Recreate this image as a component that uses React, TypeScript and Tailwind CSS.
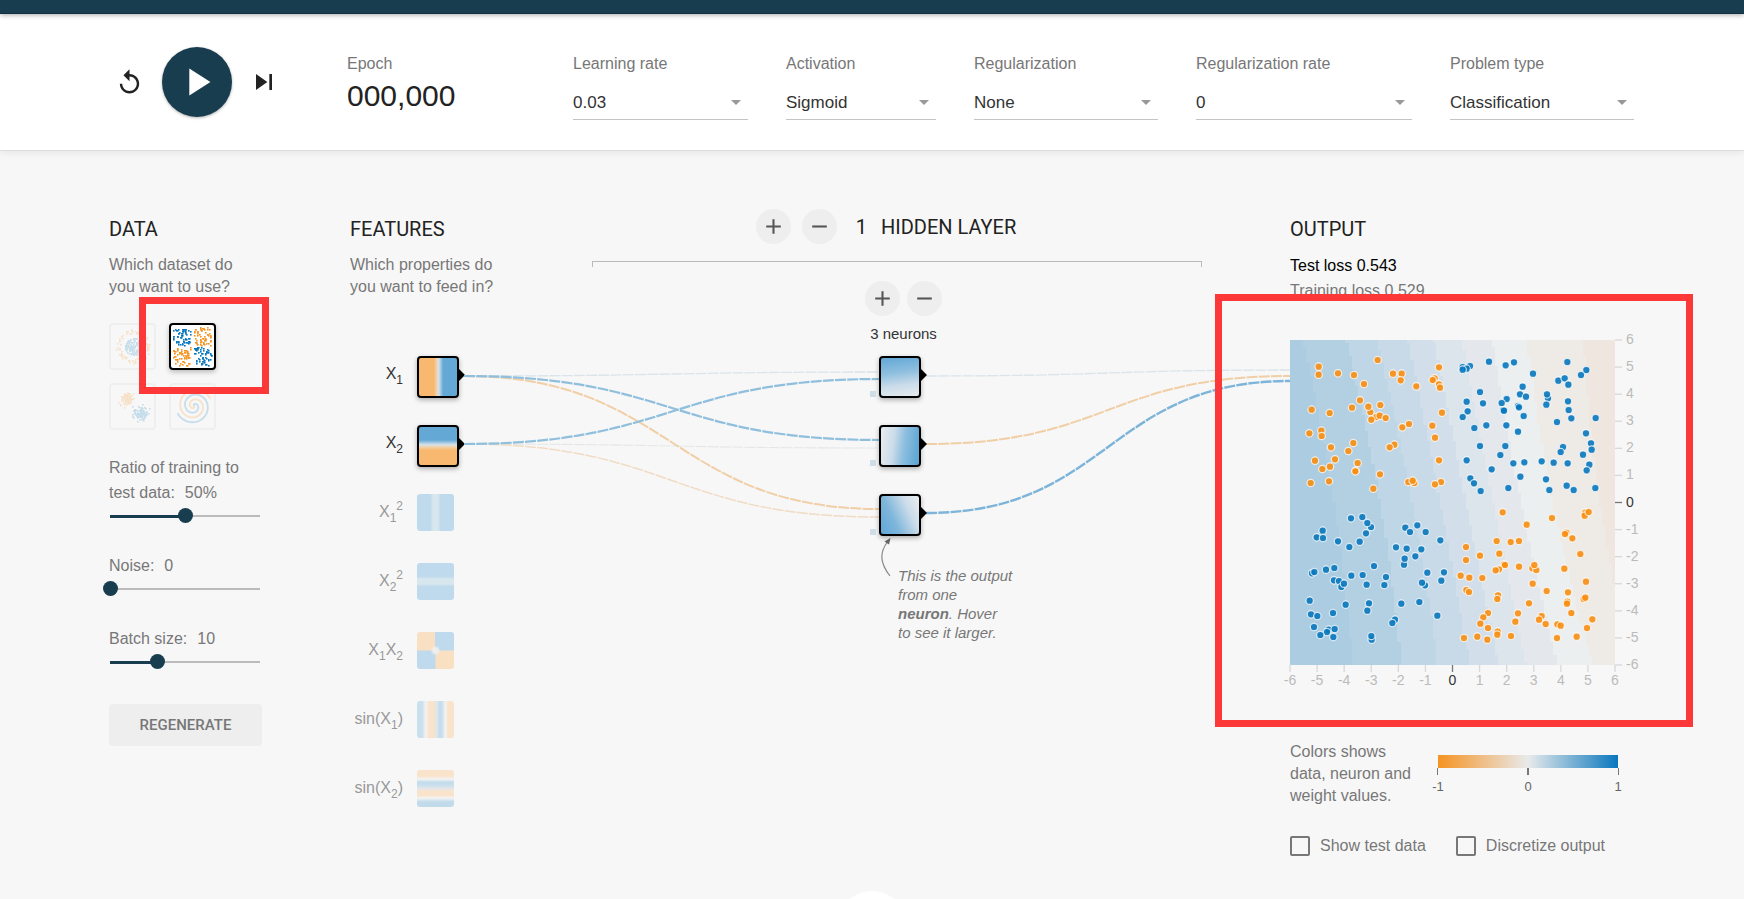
import { useState } from "react";
import type { ReactNode } from "react";

type Pair = [number, number];

const BLUE = "#0877bd";
const ORANGE = "#f59322";

/* ---------- deterministic random numbers for the thumbnails ---------- */

function createRandom(seed: number) {
  let s = seed;
  return () => {
    s = (s * 1664525 + 1013904223) % 4294967296;
    return s / 4294967296;
  };
}

function gaussian(rand: () => number) {
  return rand() + rand() + rand() + rand() - 2;
}

type Dot = { x: number; y: number; c: string };

function circleDots(): Dot[] {
  const rand = createRandom(7);
  const dots: Dot[] = [];
  for (let i = 0; i < 110; i++) {
    const a = rand() * Math.PI * 2;
    const r = Math.sqrt(rand()) * 8.5;
    dots.push({ x: 22 + r * Math.cos(a), y: 21 + r * Math.sin(a), c: BLUE });
  }
  for (let i = 0; i < 90; i++) {
    const a = rand() * Math.PI * 2;
    const r = 13 + rand() * 4;
    dots.push({ x: 22 + r * Math.cos(a), y: 21 + r * Math.sin(a), c: ORANGE });
  }
  return dots;
}

function xorDots(): Dot[] {
  const rand = createRandom(21);
  const dots: Dot[] = [];
  for (let i = 0; i < 250; i++) {
    const left = i % 2 === 0;
    const top = i % 4 < 2;
    dots.push({
      x: (left ? 2 : 23) + rand() * 17,
      y: (top ? 2 : 22) + rand() * 18,
      c: left === top ? BLUE : ORANGE,
    });
  }
  return dots;
}

function gaussDots(): Dot[] {
  const rand = createRandom(5);
  const dots: Dot[] = [];
  for (let i = 0; i < 100; i++) {
    dots.push({ x: 15 + gaussian(rand) * 6, y: 13 + gaussian(rand) * 6, c: ORANGE });
    dots.push({ x: 29 + gaussian(rand) * 6, y: 28 + gaussian(rand) * 6, c: BLUE });
  }
  return dots;
}

function spiralPath(phase: number) {
  const parts: string[] = [];
  for (let i = 0; i <= 80; i++) {
    const t = i / 80;
    const a = t * 1.85 * 2 * Math.PI + phase;
    const r = t * 18;
    const x = (23 + r * Math.sin(a)).toFixed(2);
    const y = (21 - r * Math.cos(a)).toFixed(2);
    parts.push(`${i === 0 ? "M" : "L"}${x} ${y}`);
  }
  return parts.join("");
}

function Dots({ dots }: { dots: Dot[] }) {
  return (
    <svg viewBox="0 0 43 43" className="block size-full">
      {dots.map((d, i) => (
        <rect key={i} x={Math.round(d.x)} y={Math.round(d.y)} width="1.6" height="1.6" fill={d.c} />
      ))}
    </svg>
  );
}

function Spiral() {
  return (
    <svg viewBox="0 0 43 43" className="block size-full" fill="none" strokeWidth="1.8">
      <path d={spiralPath(2.1)} stroke={ORANGE} />
      <path d={spiralPath(2.1 + Math.PI)} stroke={BLUE} />
    </svg>
  );
}

const datasets: { name: string; art: ReactNode }[] = [
  { name: "Circle", art: <Dots dots={circleDots()} /> },
  { name: "Exclusive or", art: <Dots dots={xorDots()} /> },
  { name: "Gaussian", art: <Dots dots={gaussDots()} /> },
  { name: "Spiral", art: <Spiral /> },
];

/* ------------------------------ controls ------------------------------ */

function Icon({ d, className }: { d: string; className: string }) {
  return (
    <svg viewBox="0 0 24 24" className={className} fill="currentColor" aria-hidden="true">
      <path d={d} />
    </svg>
  );
}

function SelectField({ id, label, value, grow }: { id: string; label: string; value: string; grow: string }) {
  return (
    <div className={`min-w-0 ${grow}`}>
      <label htmlFor={id} className="block leading-[20px] text-[#777]">
        {label}
      </label>
      <div className="relative mt-[12px] border-b border-[#c4c4c4]">
        <select
          id={id}
          defaultValue={value}
          className="block h-[33px] w-full appearance-none bg-transparent pr-6 text-[17px] text-[#333] outline-none"
        >
          <option value={value}>{value}</option>
        </select>
        <Icon
          d="M7 10l5 5 5-5z"
          className="pointer-events-none absolute top-[4px] right-0 size-[24px] text-[#999]"
        />
      </div>
    </div>
  );
}

function RangeField({
  id,
  label,
  suffix,
  min,
  max,
  step,
  initial,
}: {
  id: string;
  label: ReactNode;
  suffix?: string;
  min: number;
  max: number;
  step: number;
  initial: number;
}) {
  const [value, setValue] = useState(initial);
  const percent = ((value - min) / (max - min)) * 100;
  return (
    <div>
      <label htmlFor={id} className="block leading-[25px] text-[#777]">
        {label}
        <span className="pl-[10px]">
          {value}
          {suffix}
        </span>
      </label>
      <div className="relative mt-[3px] ml-px flex h-[15px] w-[150px] items-center">
        <div className="h-[2px] w-full bg-[#bbb]">
          <div className="h-[3px] bg-[#183d4e]" style={{ width: `${percent}%` }} />
        </div>
        <input
          id={id}
          type="range"
          min={min}
          max={max}
          step={step}
          value={value}
          onChange={(e) => setValue(Number(e.target.value))}
          className="absolute top-0 -left-[7px] h-[15px] w-[165px] appearance-none bg-transparent [&::-webkit-slider-thumb]:size-[15px] [&::-webkit-slider-thumb]:appearance-none [&::-webkit-slider-thumb]:rounded-full [&::-webkit-slider-thumb]:bg-[#183d4e]"
        />
      </div>
    </div>
  );
}

function RoundButton({ label, minus }: { label: string; minus?: boolean }) {
  return (
    <button
      type="button"
      aria-label={label}
      className="flex size-[35px] items-center justify-center rounded-full bg-[#eee] text-[#555]"
    >
      <Icon d={minus ? "M19 13H5v-2h14v2z" : "M19 13h-6v6h-2v-6H5v-2h6V5h2v6h6v2z"} className="size-[25px]" />
    </button>
  );
}

function Heading({ children }: { children: ReactNode }) {
  return (
    <h2 className="font-['Roboto',sans-serif] text-[20px] leading-[24px] text-[#222]">{children}</h2>
  );
}

function Connector() {
  return (
    <svg viewBox="0 0 6 12" className="absolute top-[11px] -right-[8px] h-[12px] w-[6px]" aria-hidden="true">
      <path d="M0 0l6 6-6 6z" fill="#000" />
    </svg>
  );
}

/* ------------------------------ features ------------------------------ */

function Sub({ children }: { children: ReactNode }) {
  return <sub className="bottom-[-5px] text-[12px]">{children}</sub>;
}

function Sup({ children }: { children: ReactNode }) {
  return <sup className="top-[-7px] text-[12px]">{children}</sup>;
}

const features: { key: string; label: ReactNode; active?: boolean; fill: string }[] = [
  {
    key: "x1",
    label: (
      <>
        X<Sub>1</Sub>
      </>
    ),
    active: true,
    fill: "bg-[linear-gradient(90deg,#f8b870_40%,#f3cfa4_46%,#d5e2ea_52%,#64a9d6_62%)]",
  },
  {
    key: "x2",
    label: (
      <>
        X<Sub>2</Sub>
      </>
    ),
    active: true,
    fill: "bg-[linear-gradient(180deg,#64a9d6_36%,#d5e2ea_47%,#f3cfa4_53%,#f8b870_60%)]",
  },
  {
    key: "x1sq",
    label: (
      <>
        X<Sub>1</Sub>
        <Sup>2</Sup>
      </>
    ),
    fill: "bg-[linear-gradient(90deg,#bfdaec_36%,#d8e7ee_44%,#d8e7ee_56%,#bfdaec_64%)]",
  },
  {
    key: "x2sq",
    label: (
      <>
        X<Sub>2</Sub>
        <Sup>2</Sup>
      </>
    ),
    fill: "bg-[linear-gradient(180deg,#bfdaec_36%,#d8e7ee_44%,#d8e7ee_56%,#bfdaec_64%)]",
  },
  {
    key: "x1x2",
    label: (
      <>
        X<Sub>1</Sub>X<Sub>2</Sub>
      </>
    ),
    fill: "bg-[radial-gradient(circle,#eeeeee_8%,transparent_20%),conic-gradient(#bfdaec_24%,#fae0c3_26%,#fae0c3_49%,#bfdaec_51%,#bfdaec_74%,#fae0c3_76%,#fae0c3_99%,#bfdaec)]",
  },
  {
    key: "sinx1",
    label: (
      <>
        sin(X<Sub>1</Sub>)
      </>
    ),
    fill: "bg-[linear-gradient(90deg,#cbe0ed_14%,#f3f3f3_24%,#f9e3cb_32%,#f9e3cb_44%,#dfe6ea_54%,#c2dbeb_62%,#cbe0ed_68%,#f3f3f3_77%,#f9e3cb_84%)]",
  },
  {
    key: "sinx2",
    label: (
      <>
        sin(X<Sub>2</Sub>)
      </>
    ),
    fill: "bg-[linear-gradient(180deg,#f9e3cb_16%,#f3f3f3_25%,#c2dbeb_33%,#cbe0ed_42%,#e9e6e4_52%,#f9e3cb_58%,#f9e3cb_68%,#f3f3f3_76%,#c2dbeb_86%)]",
  },
];

/* ------------------------------- network ------------------------------ */

const links: { from: Pair; to: Pair; color: string; width: number }[] = [
  { from: [464, 376], to: [880, 372], color: "#dae4ea", width: 1.3 },
  { from: [464, 444], to: [880, 448], color: "#e4e6e8", width: 1.1 },
  { from: [464, 444], to: [880, 517], color: "#f0dcc4", width: 1.5 },
  { from: [464, 376], to: [880, 509], color: "#f0cfa6", width: 2 },
  { from: [464, 376], to: [880, 440], color: "#8fbfdd", width: 2.2 },
  { from: [464, 444], to: [880, 379], color: "#8fbfdd", width: 2.2 },
  { from: [926, 376], to: [1290, 370], color: "#dae4ea", width: 1.3 },
  { from: [926, 444], to: [1290, 376], color: "#f0cfa6", width: 2 },
  { from: [926, 513], to: [1290, 381], color: "#7db4d9", width: 2.4 },
];

function linkPath([x0, y0]: Pair, [x1, y1]: Pair) {
  const mid = (x0 + x1) / 2;
  return `M${x0} ${y0}C${mid} ${y0} ${mid} ${y1} ${x1} ${y1}`;
}

const neurons = [
  "bg-[linear-gradient(172deg,#69abd7_10%,#8fbfdf_40%,#cbdcea_68%,#e6eaed_95%)]",
  "bg-[linear-gradient(97deg,#e6eaec_8%,#cbdcea_35%,#8fbfdf_58%,#62a8d5_88%)]",
  "bg-[linear-gradient(65deg,#66abd8_12%,#7fb6db_36%,#cbdcea_68%,#e8ecef_92%)]",
];

/* ------------------------------- output ------------------------------- */

/* Points are on a grid of 975 units a side, three units to a pixel. */
const upperOrange: Pair[] = [
  [86, 80], [86, 104], [144, 100], [192, 105], [263, 60], [222, 132], [309, 101], [335, 101], [332, 121],
  [379, 139], [447, 82], [434, 115], [428, 120], [447, 133], [450, 143], [65, 209], [119, 219], [186, 203],
  [210, 181], [241, 216], [235, 200], [271, 195], [259, 231], [269, 227], [244, 239], [287, 234], [456, 218],
  [58, 280], [94, 272], [95, 288], [337, 262], [357, 252], [427, 257], [435, 293], [123, 322], [190, 309],
  [175, 333], [313, 314], [299, 322], [75, 362], [135, 358], [120, 380], [97, 387], [203, 369], [197, 392],
  [196, 394], [270, 403], [447, 361], [62, 429], [117, 424], [250, 446], [355, 426], [373, 429], [368, 422],
  [453, 426], [435, 433],
];
const upperBlue: Pair[] = [
  [597, 65], [672, 67], [647, 76], [832, 66], [518, 81], [540, 78], [530, 86], [518, 89], [729, 101],
  [889, 90], [873, 105], [805, 122], [824, 115], [835, 134], [570, 156], [698, 140], [690, 163], [708, 170],
  [530, 185], [579, 190], [650, 177], [635, 189], [774, 175], [771, 163], [769, 194], [834, 184], [684, 198],
  [687, 202], [533, 214], [639, 211], [642, 212], [836, 210], [518, 231], [701, 228], [844, 235], [917, 234],
  [801, 246], [553, 264], [589, 256], [649, 256], [684, 275], [888, 280], [903, 310], [570, 318], [646, 318],
  [819, 321], [812, 336], [905, 329], [631, 345], [879, 344], [530, 361], [670, 370], [703, 367], [755, 364],
  [791, 368], [833, 370], [898, 374], [890, 391], [605, 388], [541, 415], [552, 430], [691, 410], [768, 418],
  [572, 453], [655, 444], [778, 450], [830, 437], [851, 450], [916, 444],
];
const lowerBlue: Pair[] = [
  [183, 535], [217, 531], [243, 561], [232, 549], [228, 580], [98, 572], [80, 592], [99, 594], [144, 604],
  [209, 605], [178, 621], [346, 563], [382, 556], [360, 576], [407, 576], [451, 601], [318, 622], [350, 626],
  [394, 628], [376, 649], [342, 674], [344, 656], [252, 678], [66, 700], [73, 696], [108, 689], [133, 684],
  [184, 707], [218, 705], [288, 711], [412, 698], [462, 697], [132, 721], [147, 723], [154, 741], [162, 731],
  [230, 734], [283, 735], [405, 736], [396, 728], [454, 722], [59, 782], [167, 794], [237, 790], [232, 812],
  [334, 791], [388, 786], [442, 827], [63, 823], [82, 828], [129, 819], [72, 861], [116, 869], [111, 876],
  [134, 867], [91, 885], [130, 891], [315, 839], [307, 849], [245, 899], [244, 888],
];
const lowerOrange: Pair[] = [
  [638, 517], [786, 534], [886, 518], [884, 527], [896, 516], [710, 554], [829, 578], [825, 582], [847, 595],
  [528, 621], [620, 603], [662, 606], [687, 603], [628, 641], [570, 647], [528, 660], [871, 642], [642, 673],
  [645, 675], [627, 688], [617, 691], [687, 680], [727, 685], [739, 690], [733, 675], [823, 686], [512, 707],
  [538, 713], [577, 714], [728, 731], [888, 725], [529, 750], [537, 756], [624, 766], [622, 777], [770, 753],
  [834, 757], [717, 790], [881, 777], [886, 773], [832, 785], [831, 791], [594, 819], [580, 832], [684, 820],
  [676, 845], [755, 828], [747, 839], [844, 819], [907, 838], [571, 851], [594, 864], [767, 852], [802, 853],
  [812, 857], [891, 864], [623, 875], [622, 884], [522, 894], [562, 890], [592, 899], [663, 888], [801, 894],
  [860, 890],
];

/* Band edges at the top, middle and bottom of the plot, in pixels. */
const bands: { color: string; edge: [number, number, number] }[] = [
  { color: "#b3d0e3", edge: [13, 44, 62] },
  { color: "#bfd6e6", edge: [56, 90, 111] },
  { color: "#c8dae8", edge: [87, 122, 148] },
  { color: "#d2dfea", edge: [118, 150, 180] },
  { color: "#dbe5eb", edge: [144, 176, 208] },
  { color: "#e4e8ed", edge: [172, 203, 236] },
  { color: "#ecefef", edge: [202, 231, 267] },
  { color: "#eeeae5", edge: [237, 263, 303] },
  { color: "#efe6e0", edge: [293, 310, 340] },
];

const CELL = 3.25;

function bandPath([a, b, c]: [number, number, number]) {
  let d = "";
  for (let i = 0; i < 100; i++) {
    const t = (i + 0.5) / 100;
    const v = 2 * a * (t - 0.5) * (t - 1) - 4 * b * t * (t - 1) + 2 * c * t * (t - 0.5);
    const x = Math.min(325, Math.round(v / CELL) * CELL);
    d += `${i === 0 ? "M" : "L"}${x} ${i * CELL}L${x} ${(i + 1) * CELL}`;
  }
  return `${d}L325 325L325 0Z`;
}

function Points({ data, color }: { data: Pair[]; color: string }) {
  return (
    <g fill={color} fillOpacity="0.9" stroke="#fff" strokeOpacity="0.75" strokeWidth="1.2">
      {data.map(([x, y], i) => (
        <circle key={i} cx={x / 3} cy={y / 3} r="3.7" />
      ))}
    </g>
  );
}

const ticks = [-6, -5, -4, -3, -2, -1, 0, 1, 2, 3, 4, 5, 6];

function OutputChart() {
  return (
    <svg
      viewBox="0 0 345 349"
      className="block h-[349px] w-[345px] overflow-visible font-['Liberation_Sans',sans-serif] text-[14px]"
      role="img"
      aria-label="Output of the network"
    >
      <rect width="325" height="325" fill="#abcce1" />
      <g shapeRendering="crispEdges">
        {bands.map((b) => (
          <path key={b.color} d={bandPath(b.edge)} fill={b.color} />
        ))}
      </g>
      <Points data={upperOrange} color="#f78e12" />
      <Points data={lowerOrange} color="#f78e12" />
      <Points data={upperBlue} color={BLUE} />
      <Points data={lowerBlue} color={BLUE} />
      {ticks.map((t) => {
        const p = ((t + 6) / 12) * 325;
        const line = t === 0 ? "#777" : "#d8d8d8";
        const text = t === 0 ? "#333" : "#bbb";
        return (
          <g key={t}>
            <path d={`M${p} 325v7`} stroke={line} strokeWidth="1.3" />
            <path d={`M325 ${325 - p}h7`} stroke={line} strokeWidth="1.3" />
            <text x={p} y="345" textAnchor="middle" fill={text}>
              {t}
            </text>
            <text x="336" y={329 - p} fill={text}>
              {t}
            </text>
          </g>
        );
      })}
    </svg>
  );
}

function Legend() {
  return (
    <svg
      viewBox="0 0 183 40"
      className="mt-[14px] block h-[40px] w-[183px] overflow-visible font-['Liberation_Sans',sans-serif] text-[13px]"
      role="img"
      aria-label="Color scale from -1 to 1"
    >
      <defs>
        <linearGradient id="scale">
          <stop offset="0" stopColor="#f59322" />
          <stop offset="0.5" stopColor="#e8eaeb" />
          <stop offset="1" stopColor="#0877bd" />
        </linearGradient>
      </defs>
      <rect x="1" width="180" height="13" fill="url(#scale)" />
      <path d="M.5 13v7M181.500 13v7" stroke="#777" />
      <path d="M91 13v7" stroke="#777" strokeWidth="2" />
      <g fill="#666" textAnchor="middle">
        <text x="1" y="36">-1</text>
        <text x="91" y="36">0</text>
        <text x="181" y="36">1</text>
      </g>
    </svg>
  );
}

function CheckField({ id, label }: { id: string; label: string }) {
  return (
    <div className="flex items-center gap-[10px]">
      <input
        id={id}
        type="checkbox"
        className="size-[20px] appearance-none rounded-[2px] border-2 border-[#777] checked:bg-[#183d4e]"
      />
      <label htmlFor={id} className="leading-[20px] text-[#777]">
        {label}
      </label>
    </div>
  );
}

/* -------------------------------- page -------------------------------- */

export default function App() {
  const [selected, setSelected] = useState(1);

  return (
    <div className="relative min-h-screen overflow-hidden bg-[#f7f7f7] font-['Liberation_Sans',Arial,sans-serif] text-[16px] text-[#333]">
      <div className="relative z-10 h-[14px] border-b border-[#12303e] bg-[#183d4e] shadow-[0_1px_5px_rgba(0,0,0,0.35)]" />

      <header className="border-b border-[#ddd] bg-white shadow-[0_2px_8px_rgba(0,0,0,0.07)]">
        <div className="mx-auto flex h-[136px] w-full max-w-[1526px] items-start">
          <div className="flex w-[238px] shrink-0 items-center gap-[18px] pt-[33px] pl-[6px]">
            <button type="button" aria-label="Reset" className="text-[#222]">
              <Icon
                d="M12 5V1L7 6l5 5V7c3.310 0 6 2.690 6 6s-2.690 6-6 6-6-2.690-6-6H4c0 4.420 3.580 8 8 8s8-3.580 8-8-3.580-8-8-8z"
                className="block size-[29px]"
              />
            </button>
            <button
              type="button"
              aria-label="Play"
              className="flex size-[70px] items-center justify-center rounded-full bg-[#183d4e] text-white shadow-[0_1px_3px_rgba(0,0,0,0.3)]"
            >
              <Icon d="M8 5v14l11-7z" className="size-[46px]" />
            </button>
            <button type="button" aria-label="Step" className="-ml-[2px] text-[#222]">
              <Icon d="M6 18l8.500-6L6 6v12zM16 6v12h2V6h-2z" className="block size-[32px]" />
            </button>
          </div>
          <div className="w-[226px] shrink-0 pt-[40px]">
            <div className="leading-[20px] text-[#777]">Epoch</div>
            <div className="mt-[5px] text-[30px] leading-[34px] text-[#222]">000,000</div>
          </div>
          <div className="flex min-w-0 flex-1 gap-[38px] pt-[40px] pr-px">
            <SelectField id="rate" label="Learning rate" value="0.03" grow="flex-[175]" />
            <SelectField id="activation" label="Activation" value="Sigmoid" grow="flex-[150]" />
            <SelectField id="regularization" label="Regularization" value="None" grow="flex-[184]" />
            <SelectField id="regrate" label="Regularization rate" value="0" grow="flex-[216]" />
            <SelectField id="problem" label="Problem type" value="Classification" grow="flex-[184]" />
          </div>
        </div>
      </header>

      <main className="mx-auto flex w-full max-w-[1526px] items-start gap-[88px] pt-[58px]">
        <section className="w-[153px] shrink-0 pt-[8px]">
          <Heading>DATA</Heading>
          <p className="mt-[13px] leading-[22px] whitespace-nowrap text-[#777]">
            Which dataset do
            <br />
            you want to use?
          </p>
          <div className="relative mt-[25px] grid w-fit grid-cols-2 gap-[13px]">
            {datasets.map((d, i) => (
              <button
                key={d.name}
                type="button"
                aria-label={d.name}
                aria-pressed={i === selected}
                onClick={() => setSelected(i)}
                className={`size-[47px] rounded-[4px] border-2 ${
                  i === selected
                    ? "border-black bg-white shadow-[0_2px_5px_rgba(0,0,0,0.25)]"
                    : "border-[#d4d4d4] opacity-20"
                }`}
              >
                {d.art}
              </button>
            ))}
            <div className="pointer-events-none absolute -top-[26px] left-[30px] h-[97px] w-[130px] border-7 border-[#fd3838]" />
          </div>
          <div className="mt-[25px] flex flex-col gap-[30px]">
            <RangeField
              id="ratio"
              label={
                <>
                  Ratio of training to
                  <br />
                  test data:
                </>
              }
              suffix="%"
              min={10}
              max={90}
              step={10}
              initial={50}
            />
            <RangeField id="noise" label="Noise:" min={0} max={50} step={5} initial={0} />
            <RangeField id="batch" label="Batch size:" min={1} max={30} step={1} initial={10} />
          </div>
          <button
            type="button"
            className="mt-[35px] block h-[42px] w-full rounded-[4px] bg-[#eee] font-['Roboto',sans-serif] text-[15px] font-medium text-[#777]"
          >
            REGENERATE
          </button>
        </section>

        <section className="w-[154px] shrink-0 pt-[8px]">
          <Heading>FEATURES</Heading>
          <p className="mt-[13px] leading-[22px] whitespace-nowrap text-[#777]">
            Which properties do
            <br />
            you want to feed in?
          </p>
          <ul className="mt-[58px]">
            {features.map((f) => (
              <li key={f.key} className="flex h-[69px] items-start gap-[14px]">
                <span
                  className={`w-[53px] pt-[8px] text-right leading-[20px] whitespace-nowrap ${
                    f.active ? "text-[#333]" : "text-[#999]"
                  }`}
                >
                  {f.label}
                </span>
                {f.active ? (
                  <span
                    className={`relative size-[42px] rounded-[4px] border-2 border-black bg-origin-border shadow-[0_2px_5px_rgba(0,0,0,0.3)] ${f.fill}`}
                  >
                    <Connector />
                  </span>
                ) : (
                  <span className={`size-[37px] rounded-[3px] ${f.fill}`} />
                )}
              </li>
            ))}
          </ul>
        </section>

        <section className="relative min-w-0 flex-1">
          <svg
            viewBox="592 209 611 500"
            className="pointer-events-none absolute top-0 left-0 h-[500px] w-[611px] overflow-visible"
            fill="none"
            aria-hidden="true"
          >
            {links.map((l, i) => (
              <path
                key={i}
                d={linkPath(l.from, l.to)}
                stroke={l.color}
                strokeWidth={l.width}
                strokeDasharray="11 1.200"
              />
            ))}
            <path d="M890 576C880 563 879 553 888 541" stroke="#888" strokeWidth="1.2" />
            <path d="M890.500 538l-6 3.500 4.500 3z" fill="#666" />
          </svg>

          <div className="flex items-center justify-center gap-[11px] pr-[22px]">
            <RoundButton label="Add layer" />
            <RoundButton label="Remove layer" minus />
            <div className="ml-[8px] flex gap-[14px]">
              <Heading>1</Heading>
              <Heading>HIDDEN LAYER</Heading>
            </div>
          </div>
          <div className="mt-[17px] h-[6px] border-x border-t border-[#bbb]" />

          <div className="mt-[14px] flex flex-col items-center pl-[13px]">
            <div className="flex gap-[7px]">
              <RoundButton label="Add neuron" />
              <RoundButton label="Remove neuron" minus />
            </div>
            <div className="mt-[8px] text-[15px] leading-[20px]">3 neurons</div>
          </div>
          <div className="mt-[12px] flex flex-col items-center pl-[6px]">
            {neurons.map((fill) => (
              <div key={fill} className="h-[69px]">
                <div
                  className={`relative size-[42px] rounded-[4px] border-2 border-black bg-origin-border shadow-[0_2px_5px_rgba(0,0,0,0.3)] ${fill}`}
                >
                  <Connector />
                  <div className="absolute -bottom-[1px] -left-[11px] size-[6px] bg-[#cfdde6]" />
                </div>
              </div>
            ))}
          </div>
          <p className="ml-[50%] pt-[3px] pl-px text-[15px] leading-[19px] text-[#777] italic">
            This is the output
            <br />
            from one
            <br />
            <b>neuron</b>. Hover
            <br />
            to see it larger.
          </p>
        </section>

        <section className="w-[345px] shrink-0 pt-[8px]">
          <Heading>OUTPUT</Heading>
          <div className="mt-[12px] leading-[25px]">
            <div className="text-black">Test loss 0.543</div>
            <div className="text-[#777]">Training loss 0.529</div>
          </div>
          <div className="relative mt-[37px]">
            <OutputChart />
            <div className="pointer-events-none absolute -top-[46px] -left-[75px] h-[433px] w-[478px] border-7 border-[#fd3838]" />
          </div>
          <div className="mt-[52px] flex gap-[26px]">
            <p className="leading-[22px] whitespace-nowrap text-[#777]">
              Colors shows
              <br />
              data, neuron and
              <br />
              weight values.
            </p>
            <Legend />
          </div>
          <div className="mt-[29px] flex gap-[30px]">
            <CheckField id="test" label="Show test data" />
            <CheckField id="discretize" label="Discretize output" />
          </div>
        </section>
      </main>

      <div className="absolute -bottom-[62px] left-1/2 size-[70px] -translate-x-1/2 rounded-full bg-white" />
    </div>
  );
}
